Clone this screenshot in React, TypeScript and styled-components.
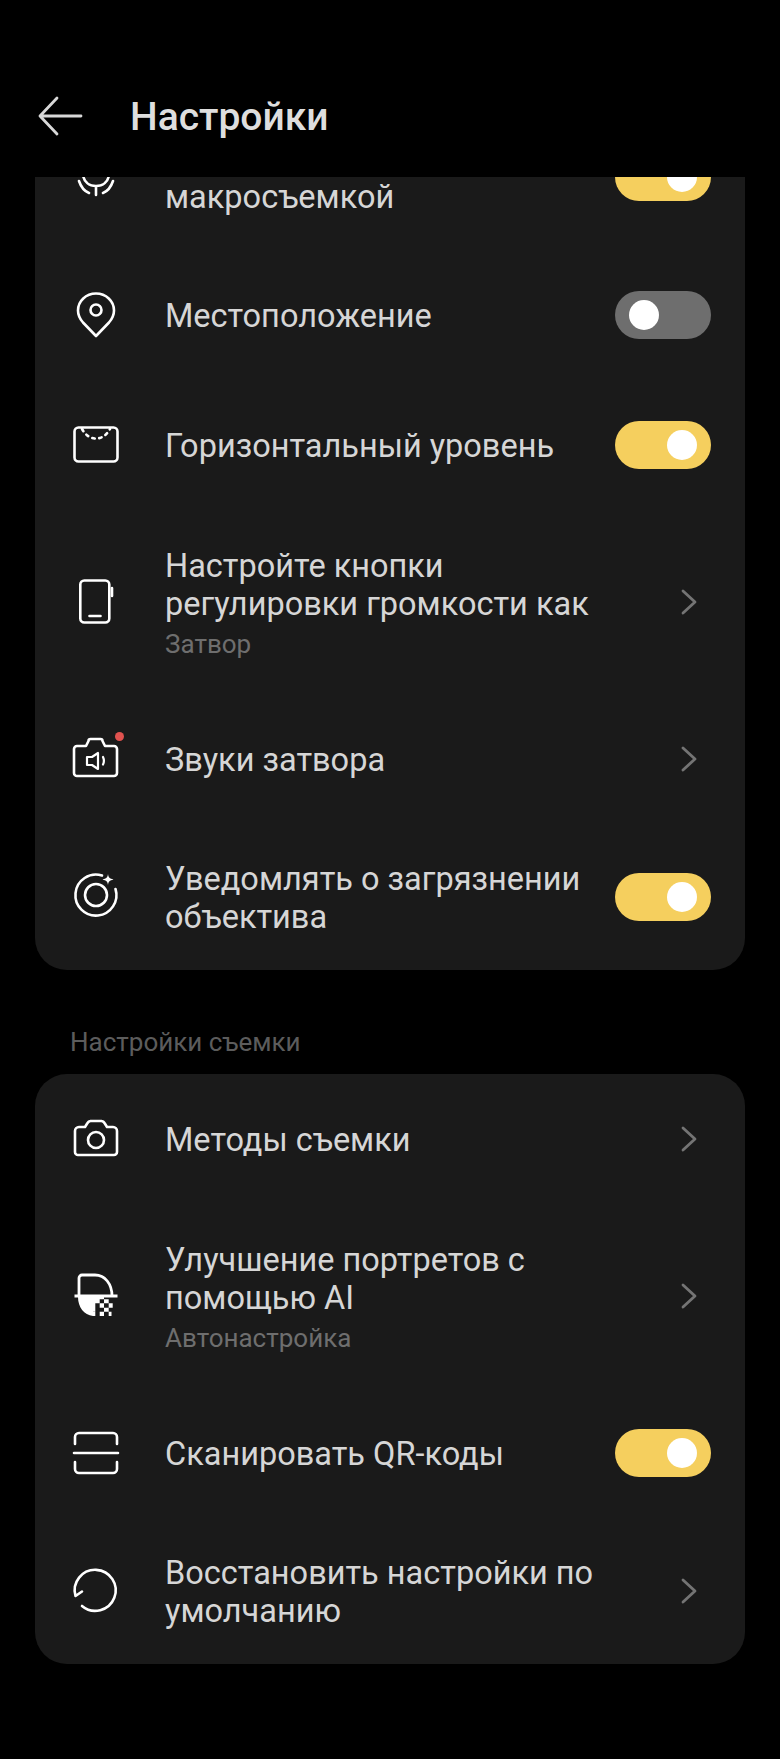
import React from "react";
import styled, { createGlobalStyle } from "styled-components";

const Global = createGlobalStyle`
  html, body { margin: 0; padding: 0; background: #000; }
  body { font-family: Roboto, "Noto Sans", sans-serif; }
`;

const Screen = styled.div`
  width: 780px;
  height: 1759px;
  background: #000;
  display: flex;
  flex-direction: column;
  overflow: hidden;
`;

const Header = styled.header`
  flex: none;
  height: 177px;
  box-sizing: border-box;
  padding: 93px 0 0 38px;
  display: flex;
  align-items: flex-start;
  gap: 47px;
`;

const BackIcon = styled.svg`
  width: 45px;
  height: 46px;
  flex: none;
`;

const Title = styled.h1`
  margin: 0;
  font-size: 39px;
  line-height: 48px;
  font-weight: 500;
  color: #dedede;
`;

const Scroller = styled.main`
  flex: 1;
  min-height: 0;
  overflow: hidden;
  padding: 0 35px;
`;

const Card = styled.section<{ $clipped?: boolean }>`
  background: #1a1a1a;
  border-radius: 32px;
  margin-top: ${(p) => (p.$clipped ? "-73px" : "0")};
`;

const SectionLabel = styled.div`
  font-size: 26px;
  line-height: 32px;
  color: #5c5c5c;
  padding: 56px 35px 16px;
`;

const Row = styled.div`
  min-height: 130px;
  box-sizing: border-box;
  padding: 34px 34px 34px 38px;
  display: flex;
  align-items: center;
`;

const IconSlot = styled.div`
  position: relative;
  flex: none;
  width: 46px;
  height: 46px;
  margin-right: 46px;
  svg { display: block; width: 46px; height: 46px; overflow: visible; }
`;

const Dot = styled.span`
  position: absolute;
  top: -4px;
  right: -5px;
  width: 9px;
  height: 9px;
  border-radius: 50%;
  background: #e0524f;
`;

const Body = styled.div<{ $hasSub?: boolean }>`
  flex: 1;
  min-width: 0;
  padding-top: ${(p) => (p.$hasSub ? "3px" : "2px")};
`;

const Name = styled.div<{ $offset?: boolean }>`
  font-size: 32.5px;
  line-height: 38px;
  color: #d6d6d6;
  padding-top: ${(p) => (p.$offset ? "38px" : "0")};
`;

const Sub = styled.div`
  font-size: 26px;
  line-height: 32px;
  margin-top: 5px;
  color: #6e6e6e;
`;

const Toggle = styled.div<{ $on: boolean }>`
  flex: none;
  width: 96px;
  height: 48px;
  margin-left: 16px;
  box-sizing: border-box;
  padding: 0 14px;
  border-radius: 24px;
  background: ${(p) => (p.$on ? "#f5cf5e" : "#6e6e6e")};
  display: flex;
  align-items: center;
  justify-content: ${(p) => (p.$on ? "flex-end" : "flex-start")};
`;

const Knob = styled.span`
  width: 30px;
  height: 30px;
  border-radius: 50%;
  background: #fff;
`;

const ChevronIcon = styled.svg`
  flex: none;
  width: 20px;
  height: 28px;
  margin: 0 12px 0 44px;
`;

const Stroke: React.FC<{ children: React.ReactNode }> = ({ children }) => (
  <svg viewBox="0 0 46 46" fill="none" stroke="#fff" strokeWidth="2.6" strokeLinecap="round" strokeLinejoin="round">
    {children}
  </svg>
);

const icons: Record<string, React.ReactNode> = {
  macro: (
    <Stroke>
      <path d="M10 21c1 7 6 11 13 11s12-4 13-11M23 32v9M6 27c2 6 5 10 10 12M40 27c-2 6-5 10-10 12" />
    </Stroke>
  ),
  pin: (
    <Stroke>
      <path d="M23 44 10 30.500C6.500 26.500 5 23 5 18.500 5 9 13 1.500 23 1.500S41 9 41 18.500c0 4.500-1.500 8-5 12L23 44Z" />
      <circle cx="23" cy="18" r="5.500" />
    </Stroke>
  ),
  level: (
    <Stroke>
      <rect x="1.500" y="5.500" width="43" height="34" rx="4" />
      <path d="M9 7C13 14 18 16.500 23 16.500S33 14 37 7" strokeDasharray="2.500 4.500" />
    </Stroke>
  ),
  phone: (
    <Stroke>
      <rect x="7.300" y="1.500" width="29" height="42" rx="4" />
      <path d="M16.500 37h11M39 9v8" />
    </Stroke>
  ),
  sound: (
    <Stroke>
      <path d="M4 10h9l2.500-5a2 2 0 0 1 2-2h10a2 2 0 0 1 2 2L32 10h9a3 3 0 0 1 3 3v24a3 3 0 0 1-3 3H4a3 3 0 0 1-3-3V13a3 3 0 0 1 3-3Z" />
      <path d="M14 21h5l6-4v16l-6-4h-5ZM30 21c1.200 2.500 1.200 5 0 7.500" strokeWidth="2.200" />
    </Stroke>
  ),
  lens: (
    <svg viewBox="0 0 46 46" fill="none" stroke="#fff" strokeWidth="2.600" strokeLinecap="round">
      <path d="M29 1.500A20.500 20.500 0 1 0 42.500 15" />
      <circle cx="23" cy="21" r="11" />
      <path d="M35 0c.5 3.500 1.500 4.500 5.500 5.500-4 1-5 2-5.500 5.500-.5-3.500-1.500-4.500-5.500-5.500 4-1 5-2 5.500-5.500Z" fill="#fff" stroke="none" />
    </svg>
  ),
  camera: (
    <Stroke>
      <path d="M6 11h6l2.500-4a4 4 0 0 1 3-2h11a4 4 0 0 1 3 2l2.500 4h6a4 4 0 0 1 4 4v21a3 3 0 0 1-3 3H5a3 3 0 0 1-3-3V15a4 4 0 0 1 4-4Z" />
      <circle cx="23" cy="24" r="8" />
    </Stroke>
  ),
  portrait: (
    <svg viewBox="0 0 46 46" fill="none">
      <path d="M6 23V5a3 3 0 0 1 3-3h13c10 0 17 9 17 21" stroke="#fff" strokeWidth="2.800" />
      <path d="M1.500 21.500h43v3h-43z" fill="#fff" />
      <path d="M5 24h26v2.300h-4.300v4h-4.400v8.400H20V43C11 42 5 34 5 24Z" fill="#fff" />
      <path d="M31 26.300h4.700v4H31zM26.700 30.300H31v4.400h-4.300zM35.700 30.300h4v4.400h-4zM31 34.700h4.700v4H31zM26.700 38.700H31V43h-4.300zM35.700 38.700h2.800V43h-2.800zM22.300 38.700h-2.300v4.300h2.300z" fill="#fff" />
    </svg>
  ),
  scan: (
    <Stroke>
      <path d="M2 14V7a4 4 0 0 1 4-4h34a4 4 0 0 1 4 4v7M2 32v7a4 4 0 0 0 4 4h34a4 4 0 0 0 4-4v-7M1 23h44" />
    </Stroke>
  ),
  reset: (
    <Stroke>
      <path d="M2.500 28A20.500 20.500 0 1 1 9 38M2.500 28 9 23.500" />
    </Stroke>
  ),
};

type Item = {
  icon: string;
  lines: string;
  sub?: string;
  toggle?: boolean;
  dot?: boolean;
  offset?: boolean;
};

const first: Item[] = [
  { icon: "macro", lines: "макросъемкой", toggle: true, offset: true },
  { icon: "pin", lines: "Местоположение", toggle: false },
  { icon: "level", lines: "Горизонтальный уровень", toggle: true },
  { icon: "phone", lines: "Настройте кнопки регулировки громкости как", sub: "Затвор" },
  { icon: "sound", lines: "Звуки затвора", dot: true },
  { icon: "lens", lines: "Уведомлять о загрязнении объектива", toggle: true },
];

const second: Item[] = [
  { icon: "camera", lines: "Методы съемки" },
  { icon: "portrait", lines: "Улучшение портретов с помощью AI", sub: "Автонастройка" },
  { icon: "scan", lines: "Сканировать QR-коды", toggle: true },
  { icon: "reset", lines: "Восстановить настройки по умолчанию" },
];

const SettingRow: React.FC<{ item: Item }> = ({ item }) => (
  <Row>
    <IconSlot>
      {icons[item.icon]}
      {item.dot && <Dot />}
    </IconSlot>
    <Body $hasSub={!!item.sub}>
      <Name $offset={item.offset}>{item.lines}</Name>
      {item.sub && <Sub>{item.sub}</Sub>}
    </Body>
    {item.toggle === undefined ? (
      <ChevronIcon viewBox="0 0 20 28" fill="none" stroke="#747474" strokeWidth="2.800" strokeLinecap="round" strokeLinejoin="round">
        <path d="M4 3l12 11L4 25" />
      </ChevronIcon>
    ) : (
      <Toggle $on={item.toggle}>
        <Knob />
      </Toggle>
    )}
  </Row>
);

export default function App() {
  return (
    <Screen>
      <Global />
      <Header>
        <BackIcon viewBox="0 0 45 46" fill="none" stroke="#d8d8d8" strokeWidth="2.800" strokeLinecap="round" strokeLinejoin="round">
          <path d="M43 23H2M19 5 2 23l17 18" />
        </BackIcon>
        <Title>Настройки</Title>
      </Header>
      <Scroller>
        <Card $clipped>
          {first.map((item) => (
            <SettingRow key={item.icon} item={item} />
          ))}
        </Card>
        <SectionLabel>Настройки съемки</SectionLabel>
        <Card>
          {second.map((item) => (
            <SettingRow key={item.icon} item={item} />
          ))}
        </Card>
      </Scroller>
    </Screen>
  );
}
